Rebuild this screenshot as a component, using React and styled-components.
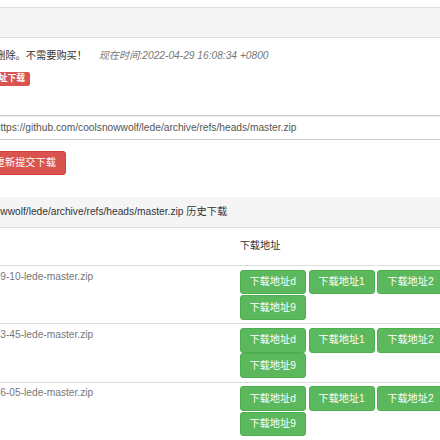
import React from 'react';
import styled, { createGlobalStyle } from 'styled-components';

// the page is a bootstrap-like layout shown at ~73%, so every size goes through u()
const SCALE = 0.729;
const u = (n) => `${(n * SCALE).toFixed(2)}px`;

const GlobalStyle = createGlobalStyle`
    html, body {
        margin: 0;
        padding: 0;
        background: #fff;
        overflow: hidden;
    }
    body {
        font-family: "Liberation Sans", "Noto Sans CJK SC", sans-serif;
        font-size: ${u(14)};
        line-height: ${u(20)};
        color: #333;
    }
`;

const Page = styled.div`
    width: ${u(1300)};
    margin-left: ${u(-178.6)};
    padding-top: ${u(9.6)};
`;

const Panel = styled.div`
    border: 1px solid #ddd;
    border-radius: ${u(4)};
    background: #fff;
`;

const PanelHeading = styled.div`
    height: ${u(20)};
    padding: ${u(9.6)} ${u(15)};
    background: #f5f5f5;
    border-bottom: 1px solid #ddd;
`;

const PanelBody = styled.div`
    padding: ${u(15)};
`;

const FormRow = styled.div`
    display: grid;
    grid-template-columns: ${u(141.6)} 1fr;
    align-items: start;
    margin-bottom: ${(p) => u(p.$mb || 0)};
`;

const RowLabel = styled.label`
    text-align: right;
    padding-right: ${u(15)};
    font-weight: bold;
    white-space: nowrap;
`;

const Notice = styled.div`
    white-space: nowrap;
`;

const Now = styled.em`
    color: #777;
    margin-left: ${u(16)};
`;

const Tag = styled.span`
    display: inline-block;
    background: #d9534f;
    color: #fff;
    font-size: ${u(12)};
    font-weight: bold;
    line-height: 1;
    padding: ${u(3)} ${u(7)} ${u(4)};
    border-radius: ${u(3)};
`;

const Input = styled.input`
    box-sizing: border-box;
    display: block;
    width: 100%;
    height: ${u(34)};
    padding: ${u(6)} ${u(12)};
    border: 1px solid #ccc;
    border-radius: ${u(4)};
    box-shadow: inset 0 1px 1px rgba(0, 0, 0, 0.075);
    font-family: inherit;
    font-size: ${u(14)};
    color: #555;
    outline: none;
`;

const Button = styled.button`
    box-sizing: border-box;
    height: ${u(34)};
    padding: ${u(6)} ${u(12)};
    border: 1px solid ${(p) => (p.$variant === 'success' ? '#4cae4c' : '#d43f3a')};
    border-radius: ${u(4)};
    background: ${(p) => (p.$variant === 'success' ? '#5cb85c' : '#d9534f')};
    color: #fff;
    font-family: inherit;
    font-size: ${u(14)};
    line-height: ${u(20)};
    white-space: nowrap;
    cursor: pointer;
`;

const SubHeading = styled.div`
    padding: ${u(10)} ${u(15)};
    background: #f5f5f5;
    border-bottom: 1px solid #ddd;
    white-space: nowrap;
`;

const Table = styled.table`
    border-collapse: collapse;
    table-layout: fixed;
    width: ${u(814)};
`;

const Th = styled.th`
    padding: ${u(16)} ${u(8)} ${u(15.5)};
    text-align: left;
    font-weight: normal;
    border-bottom: 1px solid #ddd;
    white-space: nowrap;
`;

const Td = styled.td`
    padding: ${u(5)} ${u(8)} ${u(4.6)};
    vertical-align: top;
    border-bottom: 1px solid #ddd;
    color: ${(p) => (p.$muted ? '#777' : '#333')};
    white-space: nowrap;
`;

const ButtonWrap = styled.div`
    display: flex;
    flex-wrap: wrap;
    gap: ${u(1)} ${u(4)};
`;

const url = 'https://github.com/coolsnowwolf/lede/archive/refs/heads/master.zip';

const history = [
    { id: 1, file: '2022-04-29-16-09-10-lede-master.zip' },
    { id: 2, file: '2022-04-28-20-33-45-lede-master.zip' },
    { id: 3, file: '2022-04-27-09-36-05-lede-master.zip' },
];

const mirrors = ['下载地址d', '下载地址1', '下载地址2', '下载地址9'];

const App = () => {
    return (
        <>
            <GlobalStyle />
            <Page>
                <Panel>
                    <PanelHeading />
                    <PanelBody>
                        <FormRow $mb={10.8}>
                            <RowLabel>提示：</RowLabel>
                            <Notice>
                                被删除。不需要购买！
                                <Now>现在时间:2022-04-29 16:08:34 +0800</Now>
                            </Notice>
                        </FormRow>
                        <FormRow $mb={40.3}>
                            <RowLabel>方式：</RowLabel>
                            <div>
                                <Tag>网址下载</Tag>
                            </div>
                        </FormRow>
                        <FormRow $mb={15}>
                            <RowLabel>下载地址</RowLabel>
                            <Input defaultValue={url} />
                        </FormRow>
                        <FormRow $mb={15}>
                            <span />
                            <div>
                                <Button>重新提交下载</Button>
                            </div>
                        </FormRow>
                    </PanelBody>
                    <SubHeading>{url} 历史下载</SubHeading>
                    <Table>
                        <colgroup>
                            <col style={{ width: u(65.3) }} />
                            <col style={{ width: u(432.6) }} />
                            <col style={{ width: u(316) }} />
                        </colgroup>
                        <thead>
                            <tr>
                                <Th>#</Th>
                                <Th>文件名</Th>
                                <Th>下载地址</Th>
                            </tr>
                        </thead>
                        <tbody>
                            {history.map((row) => (
                                <tr key={row.id}>
                                    <Td>{row.id}</Td>
                                    <Td $muted>{row.file}</Td>
                                    <Td>
                                        <ButtonWrap>
                                            {mirrors.map((m) => (
                                                <Button key={m} $variant="success">{m}</Button>
                                            ))}
                                        </ButtonWrap>
                                    </Td>
                                </tr>
                            ))}
                        </tbody>
                    </Table>
                </Panel>
            </Page>
        </>
    );
};

export default App;
